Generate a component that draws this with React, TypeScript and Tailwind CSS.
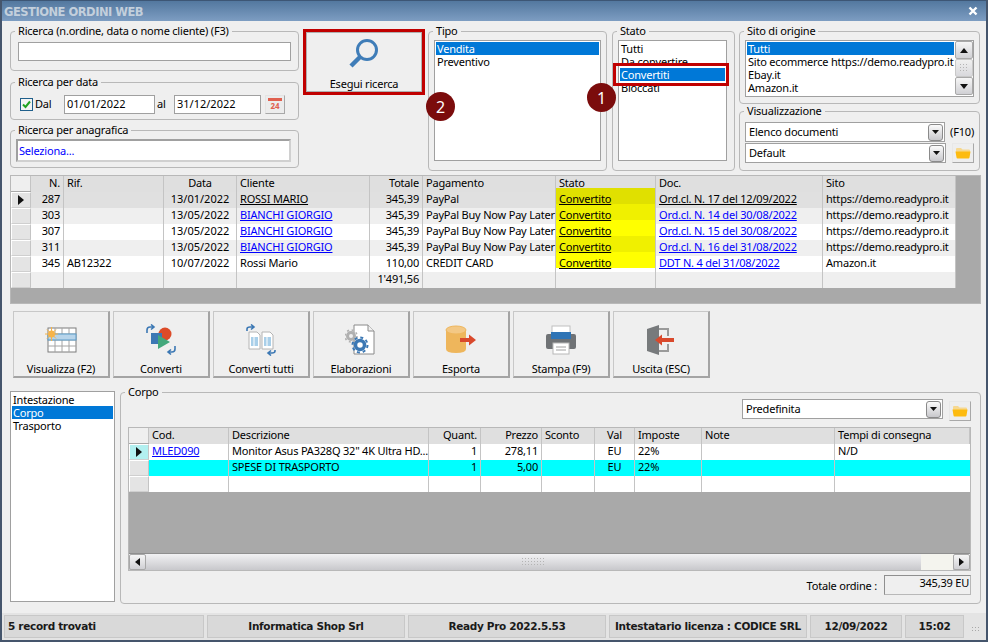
import type { ReactNode } from "react";

type Col = { label: string; right?: boolean; center?: boolean };

const ordersCols: Col[] = [
  { label: "N.", right: true },
  { label: "Rif." },
  { label: "Data", center: true },
  { label: "Cliente" },
  { label: "Totale", right: true },
  { label: "Pagamento" },
  { label: "Stato" },
  { label: "Doc." },
  { label: "Sito" },
];

const orders = [
  { n: "287", rif: "", data: "13/01/2022", cliente: "ROSSI MARIO", totale: "345,39", pag: "PayPal", doc: "Ord.cl. N. 17 del 12/09/2022", sito: "https://demo.readypro.it" },
  { n: "303", rif: "", data: "13/05/2022", cliente: "BIANCHI GIORGIO", totale: "345,39", pag: "PayPal Buy Now Pay Later", doc: "Ord.cl. N. 14 del 30/08/2022", sito: "https://demo.readypro.it" },
  { n: "307", rif: "", data: "13/05/2022", cliente: "BIANCHI GIORGIO", totale: "345,39", pag: "PayPal Buy Now Pay Later", doc: "Ord.cl. N. 15 del 30/08/2022", sito: "https://demo.readypro.it" },
  { n: "311", rif: "", data: "13/05/2022", cliente: "BIANCHI GIORGIO", totale: "345,39", pag: "PayPal Buy Now Pay Later", doc: "Ord.cl. N. 16 del 31/08/2022", sito: "https://demo.readypro.it" },
  { n: "345", rif: "AB12322", data: "10/07/2022", cliente: "Rossi Mario", totale: "110,00", pag: "CREDIT CARD", doc: "DDT N. 4 del 31/08/2022", sito: "Amazon.it" },
];

const rowBg = ["bg-[#e0e0e0]", "bg-[#efefef]", "bg-white", "bg-[#efefef]", "bg-white"];
const yellowBg = ["bg-[#e0e000]", "bg-[#f0f000]", "bg-[#ffff00]", "bg-[#f0f000]", "bg-[#ffff00]"];

const bodyCols: Col[] = [
  { label: "Cod." },
  { label: "Descrizione" },
  { label: "Quant.", right: true },
  { label: "Prezzo", right: true },
  { label: "Sconto" },
  { label: "Val", center: true },
  { label: "Imposte" },
  { label: "Note" },
  { label: "Tempi di consegna" },
];

const bodyRows = [
  { cod: "MLED090", desc: "Monitor Asus PA328Q 32\" 4K Ultra HD...", q: "1", p: "278,11", v: "EU", i: "22%", t: "N/D", bg: "bg-white" },
  { cod: "", desc: "SPESE DI TRASPORTO", q: "1", p: "5,00", v: "EU", i: "22%", t: "", bg: "bg-[#00ffff]" },
  { cod: "", desc: "", q: "", p: "", v: "", i: "", t: "", bg: "bg-white" },
];

const cell = "h-[16px] leading-[13px] px-[3px] whitespace-nowrap border-r border-[#c4c4c4]";

function align(c: Col) {
  if (c.right) return "text-right";
  if (c.center) return "text-center";
  return "text-left";
}

function Box({ label, className, inner, children }: { label: string; className: string; inner?: string; children: ReactNode }) {
  return (
    <fieldset className={`border border-[#b8b8b8] rounded-[4px] min-w-0 ${className}`}>
      <legend className="ml-[4px] px-[3px] leading-[11px] h-[13px]">{label}</legend>
      <div className={inner}>{children}</div>
    </fieldset>
  );
}

function Indicator({ active, cyan }: { active?: boolean; cyan?: boolean }) {
  return (
    <div className={`h-[16px] flex items-center justify-center border-t border-l border-white border-r border-r-[#c4c4c4] border-b border-b-[#cfcfcf] ${cyan ? "bg-[#b2f0f0]" : "bg-[#e4e4e4]"}`}>
      {active && (
        <svg width="6" height="10" viewBox="0 0 6 10">
          <path d="M0 0 L6 5 L0 10 Z" fill="#111" />
        </svg>
      )}
    </div>
  );
}

function ComboButton() {
  return (
    <div className="w-[15px] h-[17px] rounded-[3px] border border-[#8a8a8a] bg-gradient-to-b from-[#fbfbfb] to-[#c8c8cc] flex items-center justify-center">
      <svg width="7" height="4" viewBox="0 0 7 4">
        <path d="M0 0 H7 L3.5 4 Z" fill="#111" />
      </svg>
    </div>
  );
}

function Combo({ value, className }: { value: string; className: string }) {
  return (
    <div className={`bg-white border border-[#a0a0a0] flex items-center justify-between pl-[3px] pr-[1px] ${className}`}>
      <span className="pt-[1px]">{value}</span>
      <ComboButton />
    </div>
  );
}

function FolderButton() {
  return (
    <div className="w-[22px] h-[20px] bg-[#eeeeee] border border-[#e8e8e8] border-r-[#a8a8a8] border-b-[#a8a8a8] flex items-center justify-center">
      <svg width="16" height="12" viewBox="0 0 16 12">
        <path d="M1 2 Q1 1 2 1 H6 L7.5 2.5 H14 Q15 2.5 15 3.5 V5 H1 Z" fill="#f6d890" />
        <path d="M0.5 4.5 H15.5 L14.5 10.5 Q14.3 11.5 13.5 11.5 H2.5 Q1.7 11.5 1.5 10.5 Z" fill="#fdbb10" />
      </svg>
    </div>
  );
}

function Dots({ cols, rows, color = "#b4b4b4" }: { cols: number; rows: number; color?: string }) {
  const dots = [];
  for (let y = 0; y < rows; y++) {
    for (let x = 0; x < cols; x++) {
      dots.push(<rect key={`${x}-${y}`} x={x * 3} y={y * 3} width="1" height="1" fill={color} />);
    }
  }
  return (
    <svg width={cols * 3} height={rows * 3}>
      {dots}
    </svg>
  );
}

function ScrollArrow({ dir, className }: { dir: "up" | "down" | "left" | "right"; className: string }) {
  const d = {
    up: "M0 5 L4 0 L8 5 Z",
    down: "M0 0 H8 L4 5 Z",
    left: "M5 0 V8 L0 4 Z",
    right: "M0 0 V8 L5 4 Z",
  }[dir];
  const vert = dir === "up" || dir === "down";
  return (
    <div className={`rounded-[2px] border border-[#a8a8a8] bg-gradient-to-b from-[#f6f6f6] to-[#d0d0d4] flex items-center justify-center ${className}`}>
      <svg width={vert ? 8 : 5} height={vert ? 5 : 8} viewBox={vert ? "0 0 8 5" : "0 0 5 8"}>
        <path d={d} fill="#111" />
      </svg>
    </div>
  );
}

function ToolButton({ label, icon }: { label: string; icon: ReactNode }) {
  return (
    <div className="w-[97px] h-[67px] bg-[#efefef] border border-[#c8c8c8] border-r-[#a4a4a4] border-b-[#a4a4a4] border-r-2 border-b-2 flex flex-col items-center">
      <div className="h-[34px] w-[34px] mt-[11px] flex items-center justify-center">{icon}</div>
      <div className="mt-[5px] leading-[14px]">{label}</div>
    </div>
  );
}

const icons = {
  visualizza: (
    <svg width="32" height="26" viewBox="0 0 32 26">
      <rect x="3" y="1" width="28" height="24" fill="#fff" stroke="#7d7d7d" />
      <path d="M3 7 H31 M3 13 H31 M3 19 H31 M10 1 V25 M17 1 V25 M24 1 V25" stroke="#a4a4a4" />
      <rect x="3" y="7" width="28" height="6" fill="#b7d4ea" stroke="#5b9bc8" />
      <circle cx="6.5" cy="7" r="3.5" fill="#f6b44a" />
      <path d="M6.5 0 V14 M0 7 H13 M2 2.5 L11 11.5 M11 2.5 L2 11.5" stroke="#f6b44a" />
    </svg>
  ),
  converti: (
    <svg width="32" height="32" viewBox="0 0 32 32">
      <circle cx="20" cy="10" r="6.5" fill="#dc4b28" />
      <rect x="6" y="9" width="11" height="11" fill="#3c78b4" />
      <path d="M13 11 L25 18 L13 25 Z" fill="#43a87c" />
      <path d="M2 9 V6 Q2 3 5 3 H8 M6 0.5 L9 3 L6 5.5" fill="none" stroke="#3c78b4" strokeWidth="1.6" />
      <path d="M30 22 V25 Q30 28 27 28 H24 M26 25.5 L23 28 L26 30.5" fill="none" stroke="#3c78b4" strokeWidth="1.6" />
    </svg>
  ),
  tutti: (
    <svg width="32" height="32" viewBox="0 0 32 32">
      <path d="M4 8 H12 L15 11 V25 H4 Z" fill="#fff" stroke="#b4b4b4" />
      <path d="M17 8 H25 L28 11 V25 H17 Z" fill="#fff" stroke="#b4b4b4" />
      <rect x="6" y="13" width="7" height="9" fill="#a9cfe9" />
      <rect x="19" y="13" width="7" height="9" fill="#a9cfe9" />
      <path d="M9 13 V22 M22 13 V22" stroke="#fff" />
      <path d="M2 7 V5 Q2 3 5 3 H8 M6 0.5 L9 3 L6 5.5" fill="none" stroke="#3c78b4" strokeWidth="1.6" />
      <path d="M30 26 V27 Q30 29 27 29 H24 M26 26.5 L23 29 L26 31.5" fill="none" stroke="#3c78b4" strokeWidth="1.6" />
    </svg>
  ),
  elaborazioni: (
    <svg width="32" height="32" viewBox="0 0 32 32">
      <path d="M9 1 H23 L29 7 V30 H9 Z" fill="#fff" stroke="#8a8a8a" />
      <path d="M23 1 V7 H29" fill="#f0f0f0" stroke="#8a8a8a" />
      <circle cx="6" cy="12" r="3.5" fill="none" stroke="#b0b0b0" strokeWidth="3" />
      <circle cx="6" cy="12" r="6" fill="none" stroke="#b0b0b0" strokeWidth="1.6" strokeDasharray="2 2.7" />
      <circle cx="15" cy="21" r="4.5" fill="none" stroke="#3c78b4" strokeWidth="3.5" />
      <circle cx="15" cy="21" r="7.5" fill="none" stroke="#3c78b4" strokeWidth="2" strokeDasharray="3 2.9" />
    </svg>
  ),
  esporta: (
    <svg width="32" height="30" viewBox="0 0 32 30">
      <path d="M1 5 V24 Q1 28 11 28 Q21 28 21 24 V5 Z" fill="#eeb65c" />
      <ellipse cx="11" cy="5" rx="10" ry="4" fill="#f3c885" stroke="#eeb65c" />
      <path d="M15 13 H24 V9.5 L31 15 L24 20.5 V17 H15 Z" fill="#d9492c" />
    </svg>
  ),
  stampa: (
    <svg width="32" height="30" viewBox="0 0 32 30">
      <path d="M3 9 H29 Q31 9 31 11 V22 Q31 24 29 24 H3 Q1 24 1 22 V11 Q1 9 3 9 Z" fill="#6f7275" />
      <rect x="7" y="1" width="18" height="8" fill="#fff" stroke="#c0c0c0" />
      <rect x="6" y="7" width="20" height="7" fill="#2f74b5" />
      <rect x="8" y="18" width="16" height="11" fill="#fff" stroke="#b8b8b8" />
      <path d="M11 22 H21 M11 25 H21" stroke="#a0a0a0" />
    </svg>
  ),
  uscita: (
    <svg width="30" height="32" viewBox="0 0 30 32">
      <path d="M1 5 L13 1 V31 L1 27 Z" fill="#777a7c" />
      <path d="M13 5 H22 V12 M22 20 V27 H13" fill="none" stroke="#9a9a9a" strokeWidth="2" />
      <path d="M28 14 H16 V10.5 L9 16 L16 21.5 V18 H28 Z" fill="#d9492c" />
    </svg>
  ),
};

export default function App() {
  return (
    <div className="relative w-[988px] h-[642px] overflow-hidden bg-[#efefef] border-x-2 border-b-2 border-[#45556c] text-[11px] tracking-[-0.2px] text-black font-['Noto_Sans',sans-serif]">
      {/* title bar */}
      <div className="h-[21px] flex items-center justify-between pl-[2px] pr-[7px] bg-gradient-to-b from-[#53789f] to-[#7d9dc2] border-t border-[#3d5675]">
        <span className="pt-[3px] font-['DejaVu_Sans',sans-serif] font-bold text-[11.5px] text-[#c3cfdc] tracking-[-0.5px]">GESTIONE ORDINI WEB</span>
        <div className="w-[12px] h-[12px] flex items-center justify-center">
          <svg width="10" height="10" viewBox="0 0 10 10">
            <path d="M1.5 1.5 L8.5 8.5 M8.5 1.5 L1.5 8.5" stroke="#fff" strokeWidth="2.4" />
          </svg>
        </div>
      </div>

      {/* filters */}
      <div className="flex items-start pl-[8px] pt-[4px] h-[150px]">
        <div className="w-[289px] flex flex-col">
          <Box label="Ricerca (n.ordine, data o nome cliente) (F3)" className="h-[46px]" inner="px-[7px]">
            <div className="h-[19px] mt-[4px] bg-white border border-[#a0a0a0]" />
          </Box>
          <Box label="Ricerca per data" className="h-[44px] mt-[5px]" inner="pl-[9px]">
            <div className="flex items-center h-[19px] mt-[6px]">
              <div className="w-[13px] h-[13px] border border-[#1f5f8b] bg-[#f4f4f4] flex items-center justify-center">
                <svg width="9" height="9" viewBox="0 0 9 9">
                  <path d="M1 4.5 L3.5 7 L8 1.5" fill="none" stroke="#21a321" strokeWidth="2" />
                </svg>
              </div>
              <span className="ml-[2px] w-[29px]">Dal</span>
              <div className="w-[91px] h-[19px] bg-white border border-[#a0a0a0] pl-[2px] leading-[16px] tracking-normal">01/01/2022</div>
              <span className="w-[19px] pl-[2px]">al</span>
              <div className="w-[87px] h-[19px] bg-white border border-[#a0a0a0] pl-[2px] leading-[16px] tracking-normal">31/12/2022</div>
              <div className="ml-[4px] w-[20px] h-[19px] bg-[#ececec] border border-[#e4e4e4] border-r-[#a8a8a8] border-b-[#a8a8a8] flex flex-col items-center pt-[2px]">
                <div className="w-[14px] h-[3px] bg-[#e0604f]" />
                <div className="text-[8px] leading-[9px] font-bold text-[#e0604f]">24</div>
              </div>
            </div>
          </Box>
          <Box label="Ricerca per anagrafica" className="h-[44px] mt-[4px]" inner="pl-[5px] pr-[7px]">
            <div className="h-[23px] mt-[2px] bg-white border-2 border-[#d0d0d0] border-t-[#a0a0a0] border-l-[#a0a0a0] pl-[1px] leading-[19px] text-[#0000ff]">Seleziona...</div>
          </Box>
        </div>

        <div className="ml-[4px] mt-[4px] w-[122px] h-[66px] border-[3px] border-[#c00000] bg-[#efefef] flex flex-col items-center">
          <div className="w-full h-full border border-[#b0b0b0] flex flex-col items-center">
            <svg className="mt-[5px]" width="32" height="32" viewBox="0 0 32 32">
              <circle cx="19" cy="12" r="9.5" fill="none" stroke="#3f7db8" strokeWidth="3" />
              <path d="M12 19 L3 28" stroke="#3f7db8" strokeWidth="4.5" />
            </svg>
            <div className="mt-[7px] leading-[14px]">Esegui ricerca</div>
          </div>
        </div>

        <Box label="Tipo" className="ml-[3px] w-[179px] h-[146px]" inner="px-[5px]">
          <div className="h-[121px] mt-[2px] bg-white border border-[#a0a0a0] p-[1px] leading-[13px]">
            <div className="h-[13px] bg-[#0078d7] text-white pl-[1px]">Vendita</div>
            <div className="h-[13px] pl-[1px]">Preventivo</div>
          </div>
        </Box>

        <Box label="Stato" className="ml-[5px] w-[123px] h-[146px]" inner="pl-[5px] pr-[7px]">
          <div className="h-[121px] mt-[2px] bg-white border border-[#a0a0a0] p-[1px] leading-[13px]">
            <div className="h-[13px] pl-[1px]">Tutti</div>
            <div className="h-[13px] pl-[1px]">Da convertire</div>
            <div className="h-[13px] bg-[#0078d7] text-white pl-[1px]">Convertiti</div>
            <div className="h-[13px] pl-[1px]">Bloccati</div>
          </div>
        </Box>

        <div className="ml-[4px] w-[241px] flex flex-col">
          <Box label="Sito di origine" className="h-[79px]" inner="px-[5px]">
            <div className="h-[57px] mt-[2px] bg-white border border-[#a0a0a0] flex">
              <div className="flex-1 p-[1px] leading-[13px] min-w-0 whitespace-nowrap">
                <div className="h-[13px] bg-[#0078d7] text-white pl-[1px]">Tutti</div>
                <div className="h-[13px] pl-[1px]">Sito ecommerce https://demo.readypro.it</div>
                <div className="h-[13px] pl-[1px]">Ebay.it</div>
                <div className="h-[13px] pl-[1px]">Amazon.it</div>
              </div>
              <div className="w-[18px] flex flex-col">
                <ScrollArrow dir="up" className="h-[18px]" />
                <div className="h-[18px] rounded-[2px] border border-[#c8c8c8] bg-gradient-to-b from-[#f0f0f0] to-[#d8d8dc] flex items-center justify-center">
                  <Dots cols={3} rows={3} />
                </div>
                <ScrollArrow dir="down" className="h-[18px]" />
              </div>
            </div>
          </Box>
          <Box label="Visualizzazione" className="h-[66px] mt-[1px]" inner="px-[5px]">
            <div className="flex items-center mt-[4px]">
              <Combo value="Elenco documenti" className="w-[201px] h-[20px]" />
              <span className="ml-[5px]">(F10)</span>
            </div>
            <div className="flex items-center mt-[1px]">
              <Combo value="Default" className="w-[201px] h-[20px]" />
              <div className="ml-[6px]"><FolderButton /></div>
            </div>
          </Box>
        </div>
      </div>

      {/* orders grid */}
      <div className="ml-[8px] mt-[4px] w-[971px] h-[129px] bg-[#a9a9a9] border border-[#b8b8b8]">
        <div className="w-[945px] grid grid-cols-[20px_33px_100px_73px_133px_53px_133px_100px_167px_133px]">
          <div className="h-[15px] bg-[#efefef] border-r border-[#c4c4c4]" />
          {ordersCols.map((c) => (
            <div key={c.label} className={`${cell} h-[15px] bg-[#dfdfdf] ${align(c)}`}>{c.label}</div>
          ))}
          {orders.map((r, i) => [
            <Indicator key={`${r.n}-ind`} active={i === 0} />,
            <div key={`${r.n}-n`} className={`${cell} text-right ${rowBg[i]}`}>{r.n}</div>,
            <div key={`${r.n}-rif`} className={`${cell} ${rowBg[i]}`}>{r.rif}</div>,
            <div key={`${r.n}-data`} className={`${cell} text-center tracking-normal ${rowBg[i]}`}>{r.data}</div>,
            <div key={`${r.n}-cli`} className={`${cell} ${rowBg[i]}`}>
              {i === 4 ? r.cliente : <span className={`underline ${i === 0 ? "text-black" : "text-[#0000ff]"}`}>{r.cliente}</span>}
            </div>,
            <div key={`${r.n}-tot`} className={`${cell} text-right ${rowBg[i]}`}>{r.totale}</div>,
            <div key={`${r.n}-pag`} className={`${cell} ${rowBg[i]}`}>{r.pag}</div>,
            <div key={`${r.n}-st`} className={`${cell} relative ${rowBg[i]}`}>
              <div className={`absolute left-0 right-0 top-[-4px] h-[16px] ${yellowBg[i]}`} />
              <span className="relative z-10 underline">Convertito</span>
            </div>,
            <div key={`${r.n}-doc`} className={`${cell} ${rowBg[i]}`}>
              <span className={`underline ${i === 0 ? "text-black" : "text-[#0000ff]"}`}>{r.doc}</span>
            </div>,
            <div key={`${r.n}-sito`} className={`${cell} ${rowBg[i]}`}>{r.sito}</div>,
          ])}
          <Indicator />
          <div className={`${cell} bg-[#efefef]`} />
          <div className={`${cell} bg-[#efefef]`} />
          <div className={`${cell} bg-[#efefef]`} />
          <div className={`${cell} bg-[#efefef]`} />
          <div className={`${cell} bg-[#efefef] text-right`}>1'491,56</div>
          <div className={`${cell} bg-[#efefef]`} />
          <div className={`${cell} bg-[#efefef]`} />
          <div className={`${cell} bg-[#efefef]`} />
          <div className={`${cell} bg-[#efefef]`} />
        </div>
      </div>

      {/* toolbar */}
      <div className="flex gap-[3px] ml-[11px] mt-[7px]">
        <ToolButton label="Visualizza (F2)" icon={icons.visualizza} />
        <ToolButton label="Converti" icon={icons.converti} />
        <ToolButton label="Converti tutti" icon={icons.tutti} />
        <ToolButton label="Elaborazioni" icon={icons.elaborazioni} />
        <ToolButton label="Esporta" icon={icons.esporta} />
        <ToolButton label="Stampa (F9)" icon={icons.stampa} />
        <ToolButton label="Uscita (ESC)" icon={icons.uscita} />
      </div>

      {/* details */}
      <div className="flex items-start ml-[8px] mt-[8px]">
        <div className="mt-[5px] w-[105px] h-[211px] bg-white border border-[#a0a0a0] p-[1px] leading-[13px]">
          <div className="h-[13px] pl-[1px]">Intestazione</div>
          <div className="h-[13px] bg-[#0078d7] text-white pl-[1px]">Corpo</div>
          <div className="h-[13px] pl-[1px]">Trasporto</div>
        </div>

        <Box label="Corpo" className="ml-[5px] w-[861px] h-[218px]" inner="pl-[7px] pr-[9px]">
          <div className="flex justify-end items-start h-[22px]">
            <Combo value="Predefinita" className="w-[201px] h-[20px]" />
            <div className="ml-[6px] mt-[2px]"><FolderButton /></div>
          </div>
          <div className="mt-[6px] h-[144px] bg-[#a9a9a9] border border-[#b8b8b8] flex flex-col">
            <div className="flex-1 grid content-start grid-cols-[20px_80px_200px_52px_61px_53px_40px_67px_133px_135px]">
              <div className="h-[15px] bg-[#efefef] border-r border-[#c4c4c4]" />
              {bodyCols.map((c) => (
                <div key={c.label} className={`${cell} h-[15px] bg-[#dfdfdf] ${align(c)}`}>{c.label}</div>
              ))}
              {bodyRows.map((r, i) => [
                <Indicator key={`${i}-ind`} active={i === 0} cyan={i === 0} />,
                <div key={`${i}-cod`} className={`${cell} ${r.bg}`}><span className="underline text-[#0000ff]">{r.cod}</span></div>,
                <div key={`${i}-desc`} className={`${cell} overflow-hidden ${r.bg}`}>{r.desc}</div>,
                <div key={`${i}-q`} className={`${cell} text-right ${r.bg}`}>{r.q}</div>,
                <div key={`${i}-p`} className={`${cell} text-right ${r.bg}`}>{r.p}</div>,
                <div key={`${i}-s`} className={`${cell} ${r.bg}`} />,
                <div key={`${i}-v`} className={`${cell} text-center ${r.bg}`}>{r.v}</div>,
                <div key={`${i}-i`} className={`${cell} ${r.bg}`}>{r.i}</div>,
                <div key={`${i}-n`} className={`${cell} ${r.bg}`} />,
                <div key={`${i}-t`} className={`${cell} border-r-0 ${r.bg}`}>{r.t}</div>,
              ])}
            </div>
            <div className="h-[17px] flex bg-gradient-to-b from-[#f2f2f4] to-[#c8c8cc] border-t border-[#8f8f8f]">
              <ScrollArrow dir="left" className="w-[17px] h-full" />
              <div className="flex-1 flex items-center justify-center">
                <Dots cols={8} rows={3} />
              </div>
              <div className="w-[32px] h-full bg-[#f4f4ee]" />
              <ScrollArrow dir="right" className="w-[17px] h-full" />
            </div>
          </div>
          <div className="flex justify-end items-center mt-[4px]">
            <span className="pt-[3px]">Totale ordine :</span>
            <div className="ml-[7px] w-[87px] h-[20px] bg-[#efefef] border border-[#b8b8b8] border-t-[#8f8f8f] border-l-[#8f8f8f] text-right leading-[14px] pr-[1px]">345,39 EU</div>
          </div>
        </Box>
      </div>

      {/* status bar */}
      <div className="absolute left-0 right-0 bottom-0 h-[27px] bg-[#e4e4e4] flex items-center pl-[2px] gap-[3px] font-['DejaVu_Sans',sans-serif] font-bold text-[10.5px] text-[#1a1a1a] tracking-[-0.32px]">
        <div className="w-[200px] h-[23px] bg-[#d9d9d9] border border-[#c8c8c8] pl-[3px] leading-[21px]">5 record trovati</div>
        <div className="w-[198px] h-[23px] bg-[#d9d9d9] border border-[#c8c8c8] text-center leading-[21px]">Informatica Shop Srl</div>
        <div className="w-[198px] h-[23px] bg-[#d9d9d9] border border-[#c8c8c8] text-center leading-[21px]">Ready Pro 2022.5.53</div>
        <div className="w-[198px] h-[23px] bg-[#d9d9d9] border border-[#c8c8c8] text-center leading-[21px]">Intestatario licenza : CODICE SRL</div>
        <div className="w-[92px] h-[23px] bg-[#d9d9d9] border border-[#c8c8c8] text-center leading-[21px]">12/09/2022</div>
        <div className="w-[59px] h-[23px] bg-[#d9d9d9] border border-[#c8c8c8] text-center leading-[21px]">15:02</div>
        <div className="ml-[5px] mt-[6px]"><Dots cols={3} rows={2} color="#a8a8a8" /></div>
      </div>

      {/* annotations over the screenshot */}
      <div className="absolute left-[611px] top-[63px] w-[116px] h-[23px] border-[3px] border-[#c00000]" />
      <div className="absolute left-[424px] top-[92px] w-[29px] h-[29px] rounded-full bg-[#7b0c0c] text-white text-[16px] tracking-normal flex items-center justify-center">2</div>
      <div className="absolute left-[585px] top-[83px] w-[29px] h-[29px] rounded-full bg-[#7b0c0c] text-white text-[16px] tracking-normal flex items-center justify-center">1</div>
    </div>
  );
}
